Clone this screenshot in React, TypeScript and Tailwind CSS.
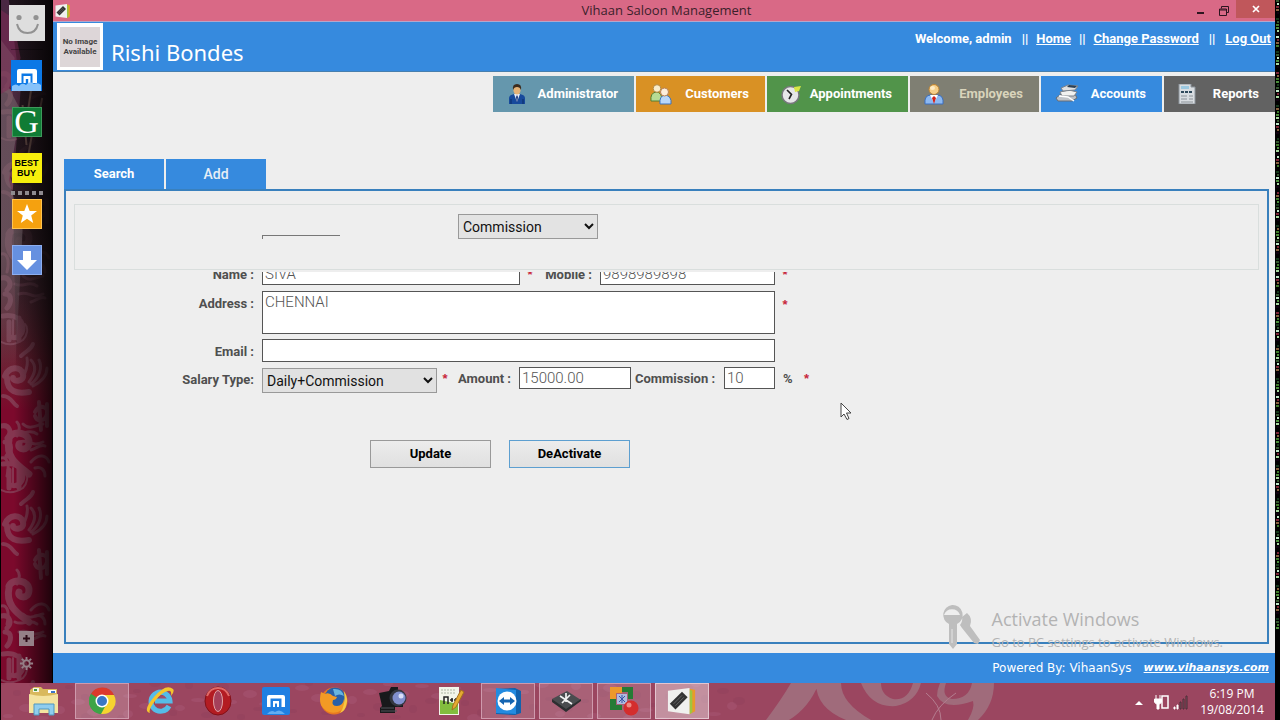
import React from "react";

const label = "block text-[13px] leading-4 font-bold text-[#4f4f4f] whitespace-nowrap font-[Roboto,sans-serif]";
const field =
  "border border-[#555] bg-white px-0.5 font-[Roboto,sans-serif] font-light text-[15px] leading-[18px] text-[#555] outline-none rounded-none";
const Star = () => <span className="block w-3 text-center text-[13px] leading-4 font-bold text-[#c8283c]">*</span>;

function Swirls({ className }: { className: string }) {
  return (
    <svg className={className} viewBox="0 0 52 683" preserveAspectRatio="xMinYMin slice" aria-hidden="true">
      <defs>
        <g id="damask" fill="none" stroke="#8a4f64" strokeLinecap="round">
          <path strokeWidth="5" d="M0 6c8-2 12 6 6 12M4 22c8 0 6 10 2 14" />
          <path strokeWidth="3" d="M14 12c8 4 14-4 22 2M18 22c10-4 12 6 24 0M22 4c6 6 12 2 20 0M30 30c6-2 10-6 14-4" />
          <path strokeWidth="5" d="M2 44c12-2 20 4 20 12s-8 12-14 8M8 50v18M18 46v22" />
          <path strokeWidth="2" d="M12 48v18M24 52c4 4 2 12-2 16M0 70c8 4 16 2 22-2" />
          <path strokeWidth="6" d="M4 104c4-10 16-10 18-2s-10 8-10 4M6 106c0 14 10 16 22 14" />
          <path strokeWidth="3" d="M26 86c2 8-2 14-4 20M30 88c6 6 4 14-2 22M38 88c4 8 0 18-8 24M46 96c0 8-6 14-14 18" />
          <path strokeWidth="4" d="M2 124c8 0 10 8 14 10M20 84c6-6 10-6 12-12" />
          <path strokeWidth="4" d="M34 140c4-8 14-6 12 2s-10 8-12 2M38 130l2 28M46 132v22" />
          <path strokeWidth="7" d="M8 166c4-8 20-6 20 4s-12 8-10 2M8 168c-4 18 10 26 20 34" />
          <path strokeWidth="3" d="M16 150c4 4 2 10 0 14M0 186c8-2 8 10 6 18M30 190c8-10 16-6 18 0M34 196c6-2 10 2 10 8" />
        </g>
      </defs>
      <g opacity=".65">
        <use href="#damask" y="68" />
        <use href="#damask" y="272" />
        <use href="#damask" y="420" />
        <use href="#damask" y="610" />
      </g>
    </svg>
  );
}

const MaxthonIcon = ({ className }: { className: string }) => (
  <svg className={className} viewBox="0 0 31 31">
    <rect width="31" height="31" fill="#0b78e6" />
    <path d="M6 23V11q0-2 2-2h16q2 0 2 2v12h-4.500V13.500h-11V23z" fill="#fff" />
    <path d="M12.500 23v-7h7v7h-2.300v-4h-2.400v4z" fill="#fff" />
    <path d="M1 31v-5q4-3 7 0q3-4 7-1q4-5 8-1q4-2 7 1v6z" fill="#86c2fa" />
  </svg>
);

function Sidebar() {
  return (
    <aside className="relative w-[53px] shrink-0 overflow-hidden border-x border-black bg-linear-to-b from-[#4a2843] via-[#4d2b38] via-40% to-[#7c092c] to-60%">
      <Swirls className="absolute inset-0 h-full w-full" />
      <svg className="absolute inset-x-0 top-0 h-[380px] w-full" viewBox="0 0 52 380" preserveAspectRatio="none" aria-hidden="true">
        <defs>
          <linearGradient id="fade" x1="0" y1="0" x2="0" y2="1">
            <stop offset="0" stopColor="#171015" stopOpacity=".85" />
            <stop offset=".6" stopColor="#1c1317" stopOpacity=".75" />
            <stop offset="1" stopColor="#1c1317" stopOpacity="0" />
          </linearGradient>
          <linearGradient id="fadeLight" x1="0" y1="0" x2="0" y2="1">
            <stop offset="0" stopColor="#75646b" stopOpacity=".6" />
            <stop offset=".6" stopColor="#75646b" stopOpacity=".6" />
            <stop offset="1" stopColor="#75646b" stopOpacity="0" />
          </linearGradient>
        </defs>
        <path d="M8 0h44v380H16L12 190 20 90z" fill="url(#fade)" />
        <path d="M0 40l14 18-6 30 12 22L8 180l14 50-8 150H0z" fill="url(#fadeLight)" />
        <path d="M0 10l12 8 8 40-10 30-10 6z" fill="#812956" opacity=".5" />
        <path d="M22 105l4 40M31 88l-7 46M36 110l-9 50M42 98l-6 30" stroke="#5f4742" strokeWidth="2" />
      </svg>
      <div className="absolute inset-0 bg-linear-to-r from-transparent from-25% to-black/75" />
      <nav className="relative flex h-full flex-col items-center pt-[5px] pb-3">
        <button aria-label="Profile">
          <svg className="block h-9 w-9" viewBox="0 0 36 36">
            <rect width="36" height="36" fill="#dedede" />
            <circle cx="10" cy="12.500" r="2.600" fill="#929292" />
            <circle cx="27" cy="12.500" r="2.600" fill="#929292" />
            <path d="M8 19q2 9 10.500 9T29 19" fill="none" stroke="#929292" strokeWidth="2" />
          </svg>
        </button>
        <div className="mt-2 h-px w-8 bg-black/30" />
        <button aria-label="Maxthon" className="mt-2.5"><MaxthonIcon className="block h-[31px] w-[31px]" /></button>
        <button aria-label="Google" className="mt-4 flex h-[30px] w-[30px] items-center justify-center border border-[#3e9a5c] bg-[#0f7c35] font-['Liberation_Serif',serif] text-[34px] leading-none text-white">G</button>
        <button aria-label="Best Buy" className="mt-4 flex h-[30px] w-[30px] flex-col items-center justify-center bg-[#f7ee0c] font-['Liberation_Sans',sans-serif] text-[9px] leading-[10px] font-black text-black">
          <span>BEST</span><span>BUY</span>
        </button>
        <div className="mt-2 flex gap-[3px]">
          {[0, 1, 2, 3, 4].map((i) => <i key={i} className="h-1 w-1 bg-[#8f8b90]" />)}
        </div>
        <button aria-label="Favourites" className="mt-1 border border-[#ffc44f] bg-[#f5a10f]">
          <svg className="block h-7 w-7" viewBox="0 0 28 28"><path d="M14 4l2.700 7H24l-5.800 4.500 2 7.500L14 18.700 7.800 23l2-7.500L4 11h7.300z" fill="#fff" /></svg>
        </button>
        <button aria-label="Downloads" className="mt-4 border border-[#8daef0] bg-[#6690e0]">
          <svg className="block h-7 w-7" viewBox="0 0 28 28"><path d="M10 5h8v9h6L14 24 4 14h6z" fill="#fff" /></svg>
        </button>
        <button aria-label="Add" className="mt-auto">
          <svg className="block h-[15px] w-[15px]" viewBox="0 0 15 15"><rect width="15" height="15" fill="#958088" /><path d="M7.500 4v7M4 7.500h7" stroke="#2c0a16" strokeWidth="2" /></svg>
        </button>
        <button aria-label="Settings" className="mt-2.5">
          <svg className="block h-[15px] w-[15px]" viewBox="0 0 16 16" fill="none" stroke="#958088">
            <circle cx="8" cy="8" r="3.500" strokeWidth="2" />
            <path strokeWidth="2" d="M8 1v3M8 12v3M1 8h3M12 8h3M3 3l2 2M11 11l2 2M13 3l-2 2M3 13l2-2" />
          </svg>
        </button>
      </nav>
    </aside>
  );
}

const AdminIcon = () => (
  <svg className="h-5 w-5" viewBox="0 0 20 20">
    <path d="M2 20v-6q0-3 5-4h6q5 1 5 4v6z" fill="#174a9c" />
    <path d="M4 20v-5M16 20v-5" stroke="#0c2c66" />
    <path d="M7 10l3 8 3-8z" fill="#e8eef8" /><path d="M10 11l1 2-1 6-1-6z" fill="#19357a" />
    <ellipse cx="10" cy="6" rx="3.600" ry="4.600" fill="#e5b277" />
    <path d="M6 6q-1-6 4-6t4 6q-1-3-4-3T6 6z" fill="#3c2b1e" />
  </svg>
);
const CustomersIcon = () => (
  <svg className="h-[21px] w-[22px]" viewBox="0 0 22 21">
    <path d="M1 17q-1-8 5-9 6 0 6 9z" fill="#b7dc93" stroke="#547f32" />
    <circle cx="7" cy="4.500" r="3.800" fill="#f9edcb" stroke="#b58b44" />
    <path d="M10 20q-1-8 5-9 7 1 6 9z" fill="#b9d8fa" stroke="#3b72bd" />
    <circle cx="14.500" cy="8" r="4" fill="#fdeedb" stroke="#b88154" />
  </svg>
);
const ClockIcon = () => (
  <svg className="h-[21px] w-5" viewBox="0 0 20 21">
    <circle cx="9.500" cy="11" r="8.500" fill="#e6e6e8" stroke="#77777c" strokeWidth="1.500" />
    <path d="M6 6l4.500 4.500L8 15" fill="none" stroke="#222" strokeWidth="1.600" />
    <path d="M13 3l7-1-2 5-4 1z" fill="#d8e645" />
  </svg>
);
const EmployeeIcon = () => (
  <svg className="h-[21px] w-5" viewBox="0 0 20 21">
    <path d="M1 20q-1-9 6-9h6q7 0 6 9z" fill="#8db9f1" stroke="#3a6fc0" />
    <path d="M6 11l4 8 4-8z" fill="#fff" /><path d="M10 12l2 2-2 6-2-6z" fill="#d1221a" />
    <circle cx="10" cy="5.500" r="5" fill="#f6cf89" stroke="#bd8331" />
    <ellipse cx="8.500" cy="4" rx="2.500" ry="2" fill="#fdebc5" />
  </svg>
);
const AccountsIcon = () => (
  <svg className="h-5 w-6" viewBox="0 0 24 20">
    <path d="M1 14l5-4h14l2 4-5 3H3z" fill="#bfc3c8" stroke="#666d76" />
    <path d="M5 8l9-2 8 2-3 4H7z" fill="#f2f2f0" stroke="#7c828a" />
    <path d="M6 4l7-3 10 1-3 4-12 1z" fill="#dfe1e3" stroke="#7a828c" />
    <path d="M14 1l8 1-2 2-8-1z" fill="#2c4054" /><path d="M4 12l9 1 6 4" stroke="#fff" fill="none" strokeWidth="1.500" />
  </svg>
);
const ReportsIcon = () => (
  <svg className="h-5 w-[18px]" viewBox="0 0 18 20">
    <path d="M1 0h12v3h4v17H1z" fill="#d9dde1" stroke="#8c949c" />
    <path d="M3 2h8v3H3z" fill="#9cc8e0" /><path d="M3 8h12" stroke="#2f4a5c" strokeWidth="2" strokeDasharray="3 1" />
    <path d="M3 12h6M11 12h4M3 15h6M11 15h4M3 18h12" stroke="#8b9298" />
  </svg>
);

const menu = [
  { t: "Administrator", c: "w-[141px] bg-[#6597ad] text-white", i: <AdminIcon /> },
  { t: "Customers", c: "w-[129px] bg-[#d99124] text-white", i: <CustomersIcon /> },
  { t: "Appointments", c: "w-[141px] bg-[#51944a] text-white", i: <ClockIcon /> },
  { t: "Employees", c: "w-[129px] bg-[#7f7f73] text-[#d9d4bb]", i: <EmployeeIcon /> },
  { t: "Accounts", c: "w-[121px] bg-[#368ade] text-white", i: <AccountsIcon /> },
  { t: "Reports", c: "w-[111px] bg-[#626262] text-white", i: <ReportsIcon /> },
];

const AppLogo = ({ className }: { className: string }) => (
  <svg className={className} viewBox="0 0 32 30">
    <path d="M24 2l6 1v23l-6 3z" fill="#e99a2a" /><path d="M24 3l3 1v23l-3 2z" fill="#9dc540" />
    <path d="M1 4l23-3v28L1 26z" fill="#f0f0ee" />
    <path d="M3 18L16 5l6 6L9 24z" fill="#333" /><path d="M7 18l9-9M9 20l9-9" stroke="#666" />
  </svg>
);

function Form() {
  return (
    <form className="flex flex-1 flex-col pt-[13px]" onSubmit={(e) => e.preventDefault()}>
      <div className="mx-2 flex h-[66px] items-start border border-[#d9dedd] pt-[9px] pl-[187px]">
        <div className="mt-[21px] h-1 w-[78px] border-t border-l border-[#777]" />
        <select aria-label="Salary filter" defaultValue="Commission" className="ml-[118px] h-[25px] w-[140px] border border-[#999] bg-[#e3e3e3] font-[Roboto,sans-serif] text-[14px] text-[#111]">
          <option>Commission</option>
        </select>
      </div>
      <div className="mt-[2px] flex flex-col overflow-hidden">
        <div className="-mt-[9px] flex items-start">
          <label htmlFor="name" className={`${label} mt-1 mr-2 w-[188px] text-right`}>Name :</label>
          <input id="name" defaultValue="SIVA" className={`${field} h-[22px] w-[258px]`} />
          <span className="mt-1 flex w-20 items-center justify-between pr-2 pl-1"><Star /><label htmlFor="mobile" className={label}>Mobile :</label></span>
          <input id="mobile" defaultValue="9898989898" className={`${field} h-[22px] w-[175px]`} />
          <span className="mt-1 ml-1"><Star /></span>
        </div>
        <div className="mt-1.5 flex items-start">
          <label htmlFor="address" className={`${label} mt-[5px] mr-2 w-[188px] text-right`}>Address :</label>
          <textarea id="address" defaultValue="CHENNAI" className={`${field} block h-[43px] w-[513px] resize-none pt-px`} />
          <span className="mt-1.5 ml-1"><Star /></span>
        </div>
        <div className="mt-[5px] flex items-start">
          <label htmlFor="email" className={`${label} mt-[5px] mr-2 w-[188px] text-right`}>Email :</label>
          <input id="email" className={`${field} h-[23px] w-[513px]`} />
        </div>
        <div className="mt-[5px] flex items-start">
          <label htmlFor="type" className={`${label} mt-[5px] mr-2 w-[188px] text-right`}>Salary Type:</label>
          <select id="type" defaultValue="Daily+Commission" className="mt-px h-[25px] w-[175px] border border-[#999] bg-[#e1e1e1] font-[Roboto,sans-serif] text-[14px] text-[#111]">
            <option>Daily+Commission</option>
          </select>
          <span className="mt-1 flex w-[82px] items-center justify-between pr-2 pl-0.5"><Star /><label htmlFor="amount" className={label}>Amount :</label></span>
          <input id="amount" defaultValue="15000.00" className={`${field} h-[22px] w-28`} />
          <label htmlFor="commission" className={`${label} mt-1 w-[93px] pl-1`}>Commission :</label>
          <input id="commission" defaultValue="10" className={`${field} h-[22px] w-[51px]`} />
          <span className={`${label} mt-1 ml-2`}>%</span>
          <span className="mt-1 ml-2"><Star /></span>
        </div>
      </div>
      <div className="mt-[47px] flex gap-[18px] pl-[304px] font-[Roboto,sans-serif]">
        <button className="h-7 w-[121px] border border-[#999] bg-linear-to-b from-[#ececec] to-[#e0e0e0] text-[13px] font-bold text-black">Update</button>
        <button className="h-7 w-[121px] border border-[#5d9fd0] bg-linear-to-b from-[#ececec] to-[#e0e0e0] text-[13px] font-bold text-black">DeActivate</button>
      </div>
    </form>
  );
}

function AppWindow() {
  return (
    <main className="relative flex min-w-0 flex-1 flex-col bg-[#eee]">
      <header className="flex h-[22px] items-center border-b border-[#b3a6cc] bg-[#d96986]">
        <AppLogo className="ml-0.5 h-4 w-4" />
        <h1 className="flex-1 pl-[74px] text-center font-['Open_Sans',sans-serif] text-[13px] text-[#3b1f2b]">Vihaan Saloon Management</h1>
        <button aria-label="Minimize" className="flex h-full w-6 items-center justify-center"><i className="mt-1 h-0.5 w-[7px] bg-[#2e1520]" /></button>
        <button aria-label="Restore" className="flex h-full w-6 items-center justify-center">
          <svg className="h-2.5 w-2.5" viewBox="0 0 10 10" fill="none" stroke="#2e1520"><path d="M.5 3h7v6.500h-7zM.5 4h7M2.500 2.500v-2h7v6h-2" /></svg>
        </button>
        <button aria-label="Close" className="-mt-1 flex h-[18px] w-[39px] items-center justify-center bg-[#c0575b]">
          <svg className="h-2 w-2" viewBox="0 0 8 8" stroke="#fff" strokeWidth="1.700"><path d="M1 1l6 6M7 1L1 7" /></svg>
        </button>
      </header>
      <div className="flex h-[50px] items-start border-b border-[#477fae] bg-[#368ade] text-white">
        <div className="ml-1 flex h-[47px] w-[46px] items-center justify-center self-center bg-white">
          <div className="flex h-10 w-10 items-center justify-center bg-[#ddd6d8] text-center font-[Roboto,sans-serif] text-[8px] leading-[10px] font-bold text-[#444]">No Image Available</div>
        </div>
        <span className="mt-4 ml-2 flex-1 font-['Noto_Sans',sans-serif] text-[22px] leading-7">Rishi Bondes</span>
        <div className="mt-[9px] flex gap-2 pr-1 font-[Roboto,sans-serif] text-[13px] leading-4 font-bold whitespace-nowrap">
          <span className="mr-0.5">Welcome, admin</span><span>||</span>
          <a href="#home" className="underline">Home</a><span>||</span>
          <a href="#password" className="underline">Change Password</a><span className="mx-0.5">||</span>
          <a href="#logout" className="underline">Log Out</a>
        </div>
      </div>
      <nav className="flex justify-end gap-0.5 bg-[#eee] pt-1">
        {menu.map((m) => (
          <button key={m.t} className={`flex h-9 items-center justify-between pr-4 pl-3.5 font-[Roboto,sans-serif] text-[13px] font-bold ${m.c}`}>{m.i}<span>{m.t}</span></button>
        ))}
      </nav>
      <div className="mt-[47px] ml-[11px] flex gap-0.5 font-[Roboto,sans-serif]">
        <button className="h-[30px] w-[100px] bg-[#368ade] text-[13px] font-bold text-white">Search</button>
        <button className="h-[30px] w-[100px] bg-[#368ade] text-sm font-medium text-[#e6eef6]">Add</button>
      </div>
      <section className="mr-1.5 mb-[9px] ml-[11px] flex flex-1 flex-col border-2 border-[#3980bd]"><Form /></section>
      <footer className="flex h-[30px] items-center justify-end gap-3 bg-[#368ade] pr-1.5 text-white">
        <span className="font-['DejaVu_Sans',sans-serif] text-[12px]">Powered By: VihaanSys</span>
        <a href="#site" className="font-['DejaVu_Sans',sans-serif] text-[11px] font-bold italic underline">www.vihaansys.com</a>
      </footer>
      <div className="pointer-events-none absolute right-[52px] bottom-[33px] flex items-start gap-2.5 font-['Open_Sans',sans-serif] text-[#b3b3b3]">
        <svg className="h-[46px] w-[41px]" viewBox="0 0 41 46">
          <path d="M21 13l5-4q6 5 3 13l10 14-2 4-4-1-12-15-2-3q3-4 2-8z" fill="#bebebe" />
          <path d="M11 1a10 10 0 0 1 5 19v20l-4 5-4-5V20A10 10 0 0 1 11 1z" fill="#bebebe" />
          <path d="M3 11a8.500 8.500 0 0 1 16 0z" fill="#eee" /><path d="M11 25v14" stroke="#e5e5e5" />
        </svg>
        <div className="flex flex-col">
          <span className="text-[18px] leading-[30px]">Activate Windows</span>
          <span className="text-[13px] leading-4">Go to PC settings to activate Windows.</span>
        </div>
      </div>
      <svg className="pointer-events-none absolute top-[402px] left-[787px] h-[18px] w-3" viewBox="0 0 12 18"><path d="M1 1v14l3-3 3 5.500 2-1L6.500 11H11z" fill="#fff" stroke="#444" /></svg>
    </main>
  );
}

const noise = ["#35572f", "#86603f", "#a7d9a0", "#15381b", "#7c2537", "#4b8e3b", "#000", "#bfe8c9", "#3f7b2b", "#101"];
function Noise() {
  return (
    <div className="w-[5px] shrink-0 overflow-hidden bg-black">
      <svg className="ml-px block h-[632px] w-[3px]" viewBox="0 0 3 632" preserveAspectRatio="none" aria-hidden="true">
        {Array.from({ length: 210 }, (_, i) => <rect key={i} x={((i * 5) % 3) >> 1} y={i * 3} width="3" height="2" fill={noise[(i * 7 + (i >> 2)) % 10]} />)}
      </svg>
    </div>
  );
}

const ic = "h-[30px] w-[30px]";
const tasks = [
  { n: "File Explorer", c: "", i: <svg className={ic} viewBox="0 0 30 30"><path d="M1 4l4-3h7l2 2h14v22H1z" fill="#d9b95d" /><path d="M4 2h6v4H4z" fill="#f5f5e8" /><path d="M5 3h3v2H5z" fill="#469a43" /><path d="M19 4h8v3h-8z" fill="#fff" /><path d="M22 5h4v2h-4z" fill="#3b76c8" /><path d="M0 8q14 4 29 0v19H0z" fill="#f4e3a0" /><path d="M5 29V18h20v11h-5v-6H10v6z" fill="#8fcdee" stroke="#4f97c0" /></svg> },
  { n: "Chrome", c: "border-[#cf9aad] bg-white/20", i: <svg className={ic} viewBox="0 0 30 30"><circle cx="15" cy="15" r="13" fill="#3da447" /><path d="M15 15L4 8a13 13 0 0 1 23 1z" fill="#dc3a2c" /><path d="M15 15l-1 13A13 13 0 0 0 27 9H15z" fill="#f6d330" /><path d="M15 15L4 8a13 13 0 0 0 10 20l5-9z" fill="#3da447" /><circle cx="15" cy="15" r="6.500" fill="#fff" /><circle cx="15" cy="15" r="5" fill="#3a77c4" /></svg> },
  { n: "Internet Explorer", c: "", i: <svg className={ic} viewBox="0 0 30 30"><path d="M24 20a9.500 9.500 0 1 1 1-5H10" fill="none" stroke="#55bce8" strokeWidth="5" /><path d="M5 27Q-3 25 9 11T28 3q2 2-2 7 1-6-3-5-6 1-13 10T5 27z" fill="#f5c52c" /></svg> },
  { n: "Opera", c: "", i: <svg className={ic} viewBox="0 0 30 30"><ellipse cx="15" cy="15" rx="13" ry="14" fill="#b31c22" stroke="#821018" /><path d="M4 10Q7 2 15 2t11 8" fill="none" stroke="#df6a68" strokeWidth="2" /><ellipse cx="15" cy="15" rx="4.500" ry="10.500" fill="#a4405a" stroke="#e2a3a5" /></svg> },
  { n: "Maxthon", c: "", i: <svg className={ic} viewBox="0 0 30 30"><rect x="1" y="1" width="28" height="28" rx="2" fill="#1f7fe2" /><path d="M6 21V11q0-2 2-2h14q2 0 2 2v10h-3.500v-8.500h-11V21z" fill="#fff" /><path d="M12 21v-6h6v6h-2v-3.500h-2V21z" fill="#fff" /><path d="M6 28q4-5 8-2 5-4 10 2z" fill="#62adf2" /></svg> },
  { n: "Firefox", c: "", i: <svg className={ic} viewBox="0 0 30 30"><circle cx="15" cy="15" r="13.500" fill="#e87820" /><circle cx="16" cy="12" r="10.500" fill="#2860a8" /><path d="M14 3q9-1 11 7-5-3-9 0z" fill="#68b5df" /><path d="M2 6l4 2q4-2 8 2l4 1q-1 3-4 3-2 6 4 6 6 0 7-7 3 10-6 13-11 3-17-7-2-6 0-13z" fill="#f29a25" /><path d="M25 5q5 8 2 15-1 5-6 7 6-8 4-22z" fill="#f6c844" /></svg> },
  { n: "Camera", c: "", i: <svg className={ic} viewBox="0 0 30 30"><path d="M2 7l10-2 2-4h7v4l5 2v14H18v6H3v-5l2-2z" fill="#18191b" /><path d="M4 25h16M4 22h13" stroke="#50545a" /><circle cx="21" cy="12" r="8.500" fill="#343740" /><circle cx="22" cy="12" r="6.500" fill="#8190cf" /><circle cx="24" cy="10" r="2.500" fill="#d8def8" /></svg> },
  { n: "Notepad++", c: "", i: <svg className={ic} viewBox="0 0 30 30"><path d="M4 1h20v28H4z" fill="#f2f5e9" /><path d="M5 14l18 4v10H5z" fill="#82bd3e" /><path d="M6 4h15M6 7h15" stroke="#aeb7a4" strokeDasharray="2 1" /><path d="M9 18v-7h4v7M15 14h3M17 12v4M19 14h4M21 12v4" fill="none" stroke="#222" strokeWidth="1.500" /><path d="M26 4l3 2-8 15-4 3 1-5z" fill="#e5aa32" stroke="#a6721c" /></svg> },
  { n: "TeamViewer", c: "border-[#cf9aad] bg-white/15", i: <svg className={ic} viewBox="0 0 30 30"><path d="M3 3l19-1 6 3v22l-6 2-19-1z" fill="#1162ad" /><path d="M3 2l20 2v24L3 27z" fill="#238be0" /><circle cx="14" cy="15" r="9.500" fill="#fff" /><path d="M6 15l5-4v2.500h6V11l5 4-5 4v-2.500h-6V19z" fill="#1565b1" /></svg> },
  { n: "Tool", c: "border-[#cf9aad] bg-white/15", i: <svg className={ic} viewBox="0 0 30 30"><path d="M1 13l15-8 14 9-15 11z" fill="#4a4c4f" /><path d="M1 13v3l14 10 15-11v-2L15 23z" fill="#2c2e30" /><path d="M9 10l12 8M11 17l8-8M15 7v9" stroke="#f2f2f2" strokeWidth="1.700" /></svg> },
  { n: "Recorder", c: "border-[#cf9aad] bg-white/15", i: <svg className={ic} viewBox="0 0 30 30"><path d="M1 13V1h12v6H7v6z" fill="#ec992b" /><path d="M13 1h11v12h-5V6h-6zM1 13h6v6h6v5H1z" fill="#257b35" /><rect x="8" y="8" width="10" height="10" fill="#aebbe0" /><path d="M10 10l6 6M16 10l-6 6M13 9v8" stroke="#3755a7" /><circle cx="22" cy="22" r="7.500" fill="#d42d2d" /><circle cx="20" cy="19" r="2.500" fill="#ef8a84" /></svg> },
  { n: "Vihaan Saloon Management", c: "border-[#e4c5cf] bg-white/40", i: <AppLogo className={ic} /> },
];

function Taskbar() {
  return (
    <footer className="relative flex h-[37px] shrink-0 overflow-hidden border-l border-black bg-[#9b4660]">
      <svg className="absolute inset-0 h-full w-full" viewBox="0 0 1279 37" preserveAspectRatio="xMinYMin slice" aria-hidden="true">
        <path d="M765 37q15-20 25-37h28q-10 25-30 37zM815 0h25q0 20 30 37h-25Q815 25 815 0zM860 0q10 25 35 23 20-4 25-23h-8q-5 18-20 16-12-4-12-16zM945 0q-5 14 6 16 17 0 20-16h22q0 22-16 37h-10q7-12 5-19-28 10-36-5 0-6 3-13z" fill="#a06b7b" />
        <path d="M925 10q15 12 15 27M955 10q-18 12-24 27" stroke="#b47d8f" fill="none" />
        {Array.from({ length: 90 }, (_, i) => <ellipse key={i} cx={(i * 43) % 740} cy={(i * 17) % 38} rx={4 + (i % 4)} ry={2 + (i % 3)} fill={i % 2 ? "#b06482" : "#8b4059"} opacity=".3" />)}
      </svg>
      <nav className="relative flex gap-1 pl-4">
        {tasks.map((t) => <button key={t.n} aria-label={t.n} className={`flex h-9 w-[54px] items-center justify-center border ${t.c || "border-transparent"}`}>{t.i}</button>)}
      </nav>
      <div className="relative ml-auto flex items-center text-white">
        <svg className="mr-1 h-4 w-[54px]" viewBox="0 0 54 16">
          <path d="M0 11l4-4 4 4z" fill="#fff" />
          <path d="M21 1v4M25 1v4M19.500 5h7v3q-1 2-2.500 2v5h-2v-5q-1.500 0-2.500-2z" stroke="#fff" fill="#fff" />
          <rect x="27" y="2" width="6" height="12" fill="#9b4660" stroke="#fff" strokeWidth="1.500" />
          <path d="M39 15v-2h1v2zM42 15v-4h1v4z" fill="#fff" stroke="#fff" /><path d="M45 15V8h1v7zM48 15V5h1v10zM51 15V2h1v13z" fill="#a98590" stroke="#4a2a35" />
        </svg>
        <div className="w-[82px] pr-1 text-center font-['Open_Sans',sans-serif] text-[12px] leading-4">
          <div>6:19 PM</div><div>19/08/2014</div>
        </div>
        <div className="h-full w-[5px] bg-black" />
      </div>
    </footer>
  );
}

export default function App() {
  return (
    <div className="flex min-h-screen flex-col bg-black font-['Liberation_Sans',Arial,sans-serif]">
      <div className="flex flex-1"><Sidebar /><AppWindow /><Noise /></div>
      <Taskbar />
    </div>
  );
}
